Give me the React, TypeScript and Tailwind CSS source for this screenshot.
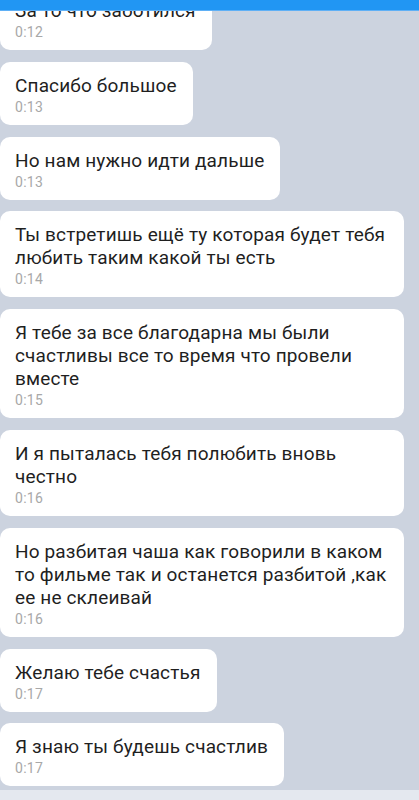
import React from "react";

interface Message {
  lines: string[];
  time: string;
}

const messages: Message[] = [
  { lines: ["За то что заботился"], time: "0:12" },
  { lines: ["Спасибо большое"], time: "0:13" },
  { lines: ["Но нам нужно идти дальше"], time: "0:13" },
  { lines: ["Ты встретишь ещё ту которая будет тебя", "любить таким какой ты есть"], time: "0:14" },
  {
    lines: ["Я тебе за все благодарна мы были", "счастливы все то время что провели", "вместе"],
    time: "0:15",
  },
  { lines: ["И я пыталась тебя полюбить вновь", "честно"], time: "0:16" },
  {
    lines: ["Но разбитая чаша как говорили в каком", "то фильме так и останется разбитой ,как", "ее не склеивай"],
    time: "0:16",
  },
  { lines: ["Желаю тебе счастья"], time: "0:17" },
  { lines: ["Я знаю ты будешь счастлив"], time: "0:17" },
];

function Bubble({ lines, time }: Message) {
  const wide = lines.length > 1;
  return (
    <div
      className={
        wide
          ? "w-[404px] rounded-[10px] bg-white pl-[15px] pr-[16px] pt-3 pb-[9px]"
          : "w-fit rounded-[10px] bg-white pl-[15px] pr-[16px] pt-3 pb-[9px]"
      }
    >
      <div className="text-[19px] leading-[23px] tracking-[0.15px] text-[#1f1f1f]">
        {lines.map((l, i) => (
          <div key={i} className="whitespace-nowrap">
            {l}
          </div>
        ))}
      </div>
      <div className="mt-[1px] text-[14px] leading-[18px] tracking-[0.3px] text-[#a8a8a8]">{time}</div>
    </div>
  );
}

export default function App() {
  return (
    <div
      className="relative flex h-[800px] w-[419px] flex-col overflow-hidden bg-[#ccd3df]"
      style={{ fontFamily: "Roboto, 'Noto Sans', sans-serif" }}
    >
      <div className="absolute left-0 right-0 top-0 z-10 h-[11px] border-b border-[#5fb0f6] bg-[#2196f3]" />
      <div className="mt-[-13px] flex flex-1 flex-col gap-[11.8px] overflow-hidden">
        {messages.map((m, i) => (
          <Bubble key={i} {...m} />
        ))}
      </div>
      <div className="h-[10px] bg-[#e4e8ef]" />
    </div>
  );
}
